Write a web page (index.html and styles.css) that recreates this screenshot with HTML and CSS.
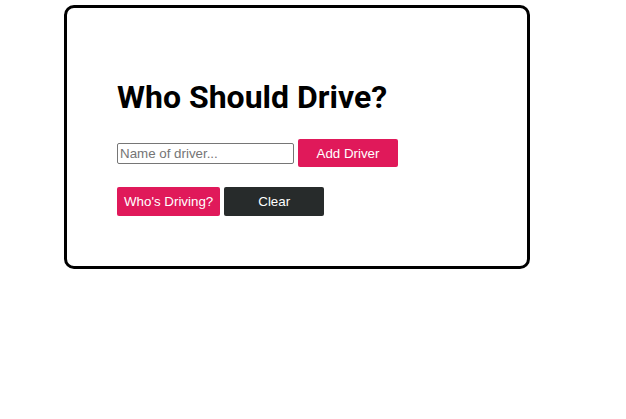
FILE: index.html
```html
<!DOCTYPE html>
<html>
<head>
<meta charset="utf-8">
<link rel="stylesheet" href="styles.css">
</head>
<body>
<div class="card">
  <h1 class="title">Who Should Drive?</h1>
  <div class="row">
    <input class="name-input" type="text" placeholder="Name of driver...">
    <button class="btn btn-primary btn-fixed">Add Driver</button>
  </div>
  <div class="row row-actions">
    <button class="btn btn-primary">Who's Driving?</button>
    <button class="btn btn-dark btn-fixed">Clear</button>
  </div>
</div>
</body>
</html>
```

FILE: styles.css
```css
html, body {
  margin: 0;
  padding: 0;
  background: #ffffff;
}

.card {
  box-sizing: border-box;
  width: 466px;
  height: 264px;
  margin: 5px 0 0 64px;
  border: 3px solid #000000;
  border-radius: 10px;
  padding: 50px;
  background: #ffffff;
}

.title {
  font-family: Roboto, "Liberation Sans", sans-serif;
  font-weight: 700;
  font-size: 32px;
  line-height: 37px;
  color: #000000;
  margin: 21px 0 23px 0;
}

.row {
  display: flex;
  align-items: center;
  gap: 4px;
}

.row-actions {
  margin-top: 20px;
}

.name-input {
  box-sizing: border-box;
  width: 177px;
  height: 21px;
  margin: 0;
  padding: 1px 2px;
  border: 1px solid #767676;
  border-radius: 2px;
  font-family: "Liberation Sans", Arial, sans-serif;
  font-size: 13.333px;
  color: #000;
}

.name-input::placeholder {
  color: #757575;
}

.btn {
  box-sizing: border-box;
  height: 28px;
  margin: 0;
  padding: 0 7px;
  border: none;
  border-radius: 2px;
  font-family: "Liberation Sans", Arial, sans-serif;
  font-size: 13.333px;
  color: #ffffff;
}

.row-actions .btn {
  height: 29px;
}

.btn-fixed {
  width: 100px;
}

.btn-primary {
  background: #e0195a;
}

.btn-dark {
  background: #272b2b;
}
```
